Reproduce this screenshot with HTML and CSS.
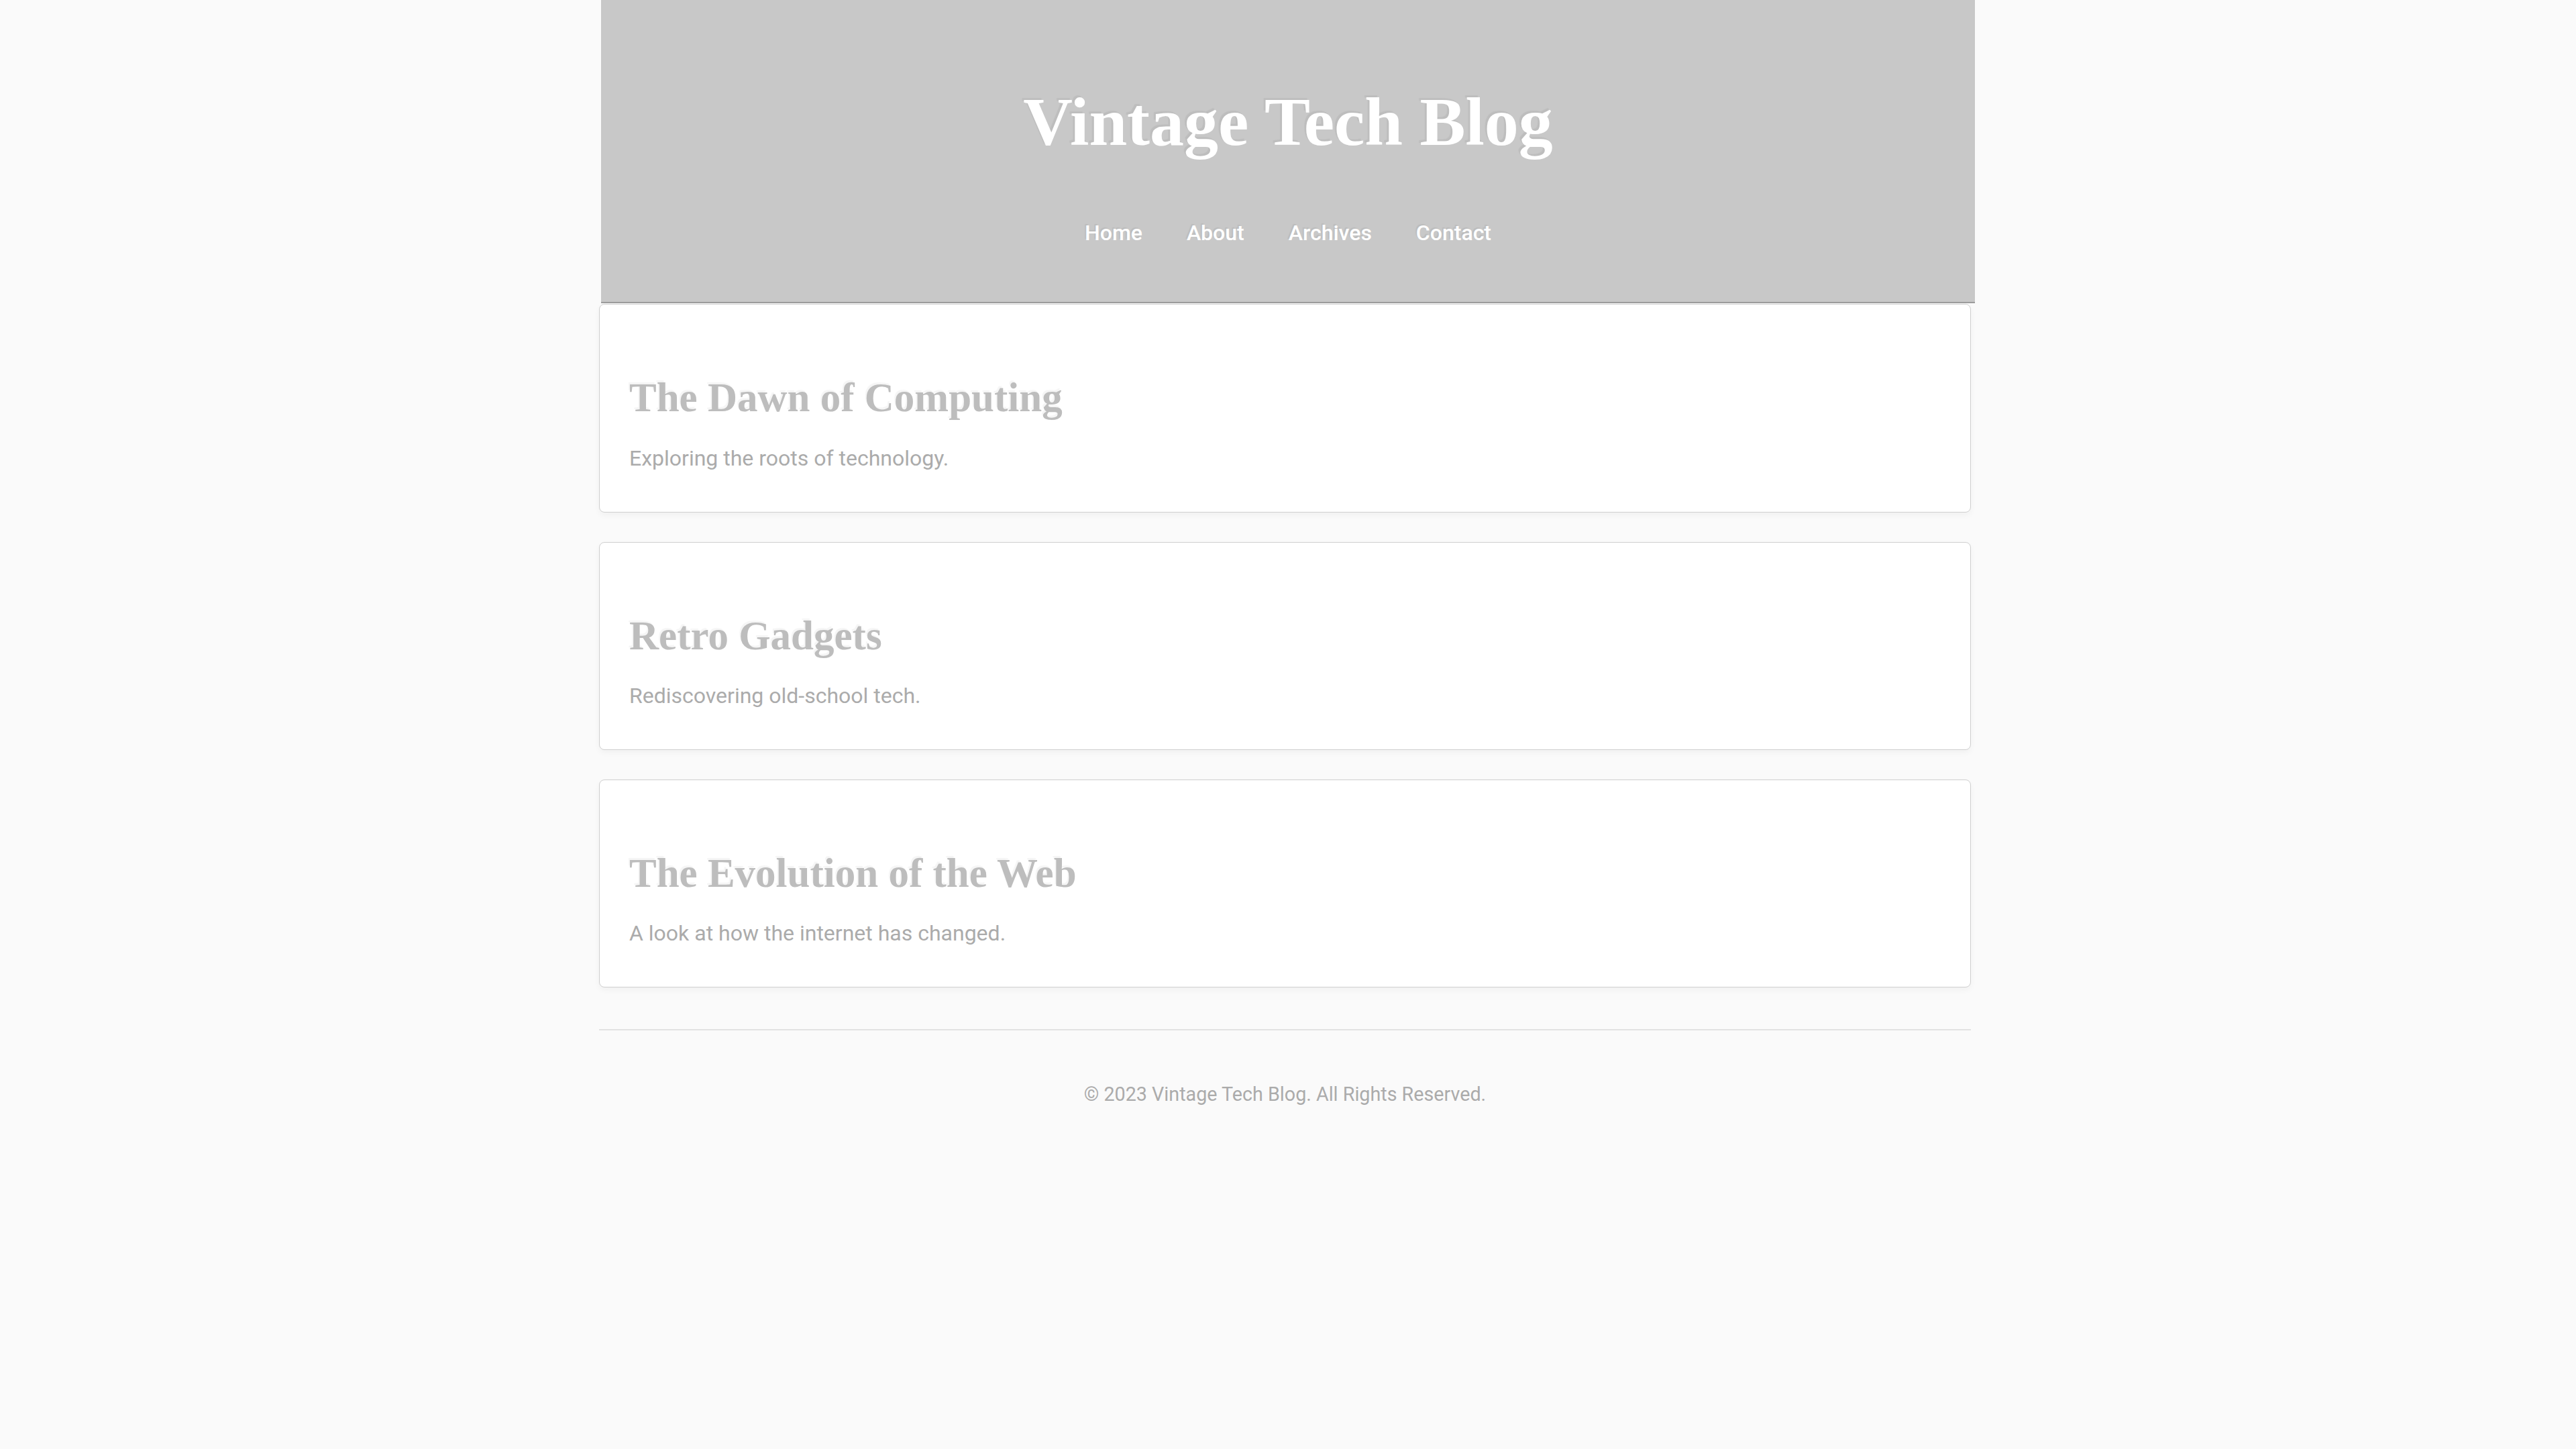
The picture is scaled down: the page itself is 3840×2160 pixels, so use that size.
FILE: index.html
```html
<!DOCTYPE html>
<html lang="en">
<head>
<meta charset="utf-8">
<title>Vintage Tech Blog</title>
<link rel="stylesheet" href="styles.css">
</head>
<body>
<div class="page">
  <header class="site-header">
    <h1 class="site-title">Vintage Tech Blog</h1>
    <nav class="site-nav">
      <a href="#">Home</a>
      <a href="#">About</a>
      <a href="#">Archives</a>
      <a href="#">Contact</a>
    </nav>
  </header>
  <main class="posts">
    <article class="post">
      <h2 class="post-title">The Dawn of Computing</h2>
      <p class="post-desc">Exploring the roots of technology.</p>
    </article>
    <article class="post">
      <h2 class="post-title">Retro Gadgets</h2>
      <p class="post-desc">Rediscovering old-school tech.</p>
    </article>
    <article class="post">
      <h2 class="post-title">The Evolution of the Web</h2>
      <p class="post-desc">A look at how the internet has changed.</p>
    </article>
  </main>
  <footer class="site-footer">
    <p>© 2023 Vintage Tech Blog. All Rights Reserved.</p>
  </footer>
</div>
</body>
</html>
```
FILE: styles.css
```css
html, body {
  margin: 0;
  padding: 0;
  background: #fafafa;
}
body {
  font-family: Roboto, "Liberation Sans", Arial, sans-serif;
  min-height: 2160px;
}
.page {
  width: 2048px;
  margin: 0 auto;
}
.site-header {
  background: #c8c8c8;
  border-bottom: 2px solid #9c9c9c;
  padding: 121px 0 79px;
  text-align: center;
}
.site-title {
  margin: 0;
  font-family: "Liberation Serif", "Times New Roman", serif;
  font-weight: 700;
  font-size: 102px;
  line-height: 1.2;
  color: #ffffff;
  text-shadow: -3px -3px 1px rgba(0, 0, 0, 0.05);
}
.site-nav {
  margin-top: 80px;
  display: flex;
  justify-content: center;
  gap: 66px;
  font-size: 32px;
  font-weight: 500;
  line-height: 1.5;
}
.site-nav a {
  color: #ffffff;
  text-decoration: none;
  text-shadow: -2px -2px 1px rgba(0, 0, 0, 0.06);
}
.posts {
  display: flex;
  flex-direction: column;
  gap: 44px;
  margin: 1px 6px 0 -3px;
}
.post {
  background: #ffffff;
  border: 1px solid #cfcfcf;
  border-radius: 8px;
  box-shadow: 0 4px 10px rgba(0, 0, 0, 0.04);
  padding: 102px 44px 56px;
}
.post-title {
  margin: 0 0 29px;
  font-family: "Liberation Serif", "Times New Roman", serif;
  font-weight: 700;
  font-size: 61px;
  line-height: 1.2;
  color: #bdbdbd;
  text-shadow: -2px -3px 1px rgba(0, 0, 0, 0.04);
}
.post-desc {
  margin: 0;
  font-size: 32px;
  line-height: 1.5;
  color: #ababab;
}
.site-footer {
  margin: 62px 6px 0 -3px;
  border-top: 2px solid #e2e2e2;
  padding-top: 74px;
  text-align: center;
}
.site-footer p {
  margin: 0;
  font-size: 28.7px;
  line-height: 1.5;
  color: #ababab;
}
```
